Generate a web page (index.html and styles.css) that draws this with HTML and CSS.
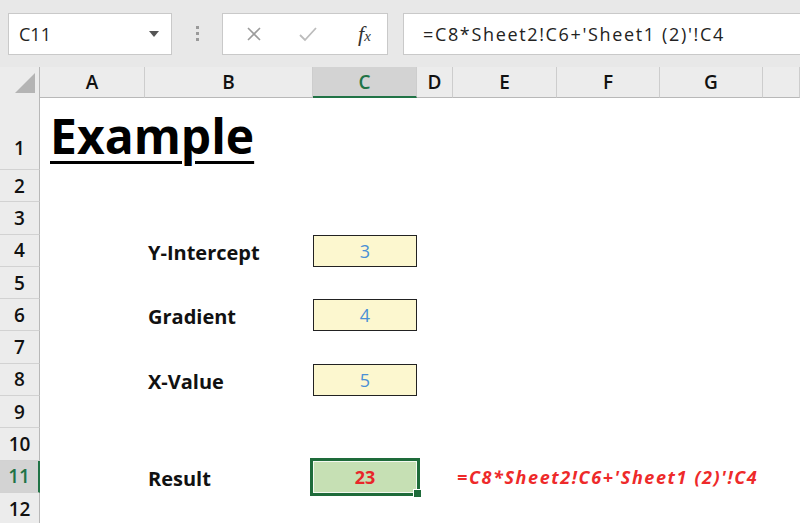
FILE: index.html
```html
<!DOCTYPE html>
<html lang="en">
<head>
    <meta charset="UTF-8">
    <title>Example - Sheet1</title>
    <link rel="stylesheet" href="styles.css">
</head>
<body>

<div class="toolbar">
    <div class="namebox">
        <span>C11</span>
        <svg width="10" height="6" viewBox="0 0 10 6"><path d="M0 0 L10 0 L5 6 Z" fill="#555"/></svg>
    </div>
    <div class="grip"><i></i><i></i><i></i></div>
    <div class="fxbox">
        <svg class="ico-x" width="16" height="16" viewBox="0 0 16 16"><path d="M2 2 L14 14 M14 2 L2 14" stroke="#9c9c9c" stroke-width="1.6" fill="none"/></svg>
        <svg class="ico-ok" width="20" height="16" viewBox="0 0 20 16"><path d="M2 9 L7 14 L18 2" stroke="#bcbcbc" stroke-width="1.8" fill="none"/></svg>
        <span class="fx">f<small>x</small></span>
    </div>
    <div class="formula">=C8*Sheet2!C6+'Sheet1 (2)'!C4</div>
</div>

<div class="sheet">
    <div class="row head">
        <div class="corner">
            <svg width="40" height="30" viewBox="0 0 40 30"><path d="M35 6 L35 26 L15 26 Z" fill="#b4b4b4"/></svg>
        </div>
        <div class="ch">A</div>
        <div class="ch">B</div>
        <div class="ch sel">C</div>
        <div class="ch">D</div>
        <div class="ch">E</div>
        <div class="ch">F</div>
        <div class="ch">G</div>
        <div class="ch"></div>
    </div>

    <div class="row tall">
        <div class="rh">1</div>
        <div class="cell title">Example</div>
    </div>
    <div class="row"><div class="rh">2</div></div>
    <div class="row"><div class="rh">3</div></div>
    <div class="row">
        <div class="rh">4</div>
        <div class="cell"></div>
        <div class="cell label">Y-Intercept</div>
        <div class="cell box">3</div>
    </div>
    <div class="row"><div class="rh">5</div></div>
    <div class="row">
        <div class="rh">6</div>
        <div class="cell"></div>
        <div class="cell label">Gradient</div>
        <div class="cell box">4</div>
    </div>
    <div class="row"><div class="rh">7</div></div>
    <div class="row">
        <div class="rh">8</div>
        <div class="cell"></div>
        <div class="cell label">X-Value</div>
        <div class="cell box">5</div>
    </div>
    <div class="row"><div class="rh">9</div></div>
    <div class="row"><div class="rh">10</div></div>
    <div class="row">
        <div class="rh sel">11</div>
        <div class="cell"></div>
        <div class="cell label">Result</div>
        <div class="cell result">23<span class="handle"></span></div>
        <div class="cell"></div>
        <div class="cell note">=C8*Sheet2!C6+'Sheet1 (2)'!C4</div>
    </div>
    <div class="row"><div class="rh">12</div></div>
</div>

</body>
</html>
```

FILE: styles.css
```css
body {
    margin: 0;
    width: 800px;
    height: 523px;
    overflow: hidden;
    font-family: "Open Sans", Lato, sans-serif;
    background: #fff;
    color: #111;
}

/* formula bar */
.toolbar {
    display: flex;
    align-items: center;
    height: 67px;
    padding-left: 8px;
    box-sizing: border-box;
    background: #e8e8e8;
}

.namebox {
    width: 164px;
    height: 42px;
    box-sizing: border-box;
    display: flex;
    align-items: center;
    justify-content: space-between;
    padding: 0 12px 0 10px;
    background: #fff;
    border: 1px solid #c9c9c9;
    font-size: 18px;
    color: #222;
}

.grip {
    width: 50px;
    display: flex;
    flex-direction: column;
    align-items: center;
    gap: 3px;
}

.grip i {
    width: 3px;
    height: 3px;
    background: #9a9a9a;
}

.fxbox {
    width: 166px;
    height: 42px;
    box-sizing: border-box;
    display: flex;
    align-items: center;
    padding-left: 23px;
    background: #fff;
    border: 1px solid #c9c9c9;
}

.ico-x { margin-right: 36px; }
.ico-ok { margin-right: 40px; }

.fx {
    font-family: "Liberation Serif", serif;
    font-style: italic;
    font-size: 22px;
    color: #333;
}

.fx small {
    font-size: 15px;
}

.formula {
    flex: 1;
    height: 42px;
    box-sizing: border-box;
    margin-left: 15px;
    display: flex;
    align-items: center;
    padding-left: 19px;
    background: #fff;
    border: 1px solid #c9c9c9;
    border-right: none;
    font-size: 18px;
    letter-spacing: 1.65px;
    color: #222;
    white-space: nowrap;
}

/* sheet */
.row {
    display: grid;
    grid-template-columns: 40px 105px 168px 104px 36px 104px 103px 103px 1fr;
    height: 32.3px;
}

.row.tall { height: 73px; }
.row.head {
    height: 30px;
    background: #ececec;
}

.corner {
    border-right: 1px solid #b8b8b8;
    border-bottom: 1px solid #b8b8b8;
    box-sizing: border-box;
}

.corner svg { display: block; }

.ch {
    display: flex;
    align-items: center;
    justify-content: center;
    box-sizing: border-box;
    border-right: 1px solid #cdcdcd;
    border-bottom: 1px solid #b8b8b8;
    font-size: 19px;
    font-weight: 600;
    color: #111;
}

.ch.sel {
    background: #d3d3d3;
    color: #217346;
    border-bottom: 2px solid #217346;
}

.rh {
    display: flex;
    align-items: center;
    justify-content: center;
    box-sizing: border-box;
    background: #ececec;
    border-right: 1px solid #b8b8b8;
    border-bottom: 1px solid #d2d2d2;
    font-size: 19px;
    font-weight: 600;
    color: #111;
}

.tall .rh {
    align-items: flex-end;
    padding-bottom: 8px;
}

.rh.sel {
    background: #d3d3d3;
    color: #217346;
    border-right: 2px solid #217346;
}

.cell {
    display: flex;
    align-items: center;
    box-sizing: border-box;
    font-size: 18px;
    white-space: nowrap;
}

.title {
    grid-column: 2 / 5;
    align-items: flex-end;
    padding: 0 0 10px 10px;
    font-size: 48px;
    line-height: 1;
    font-weight: bold;
    text-decoration: underline;
    text-decoration-thickness: 3px;
    text-underline-offset: 7px;
    color: #000;
}

.label {
    padding: 3px 0 0 3px;
    font-weight: bold;
    font-size: 20px;
}

.box {
    justify-content: center;
    background: #fcf7cf;
    border: 1.5px solid #222;
    color: #4a90d6;
}

.result {
    position: relative;
    justify-content: center;
    background: #c6e0b4;
    border: 1px solid #f4f9f0;
    outline: 3px solid #1e6b3a;
    font-weight: bold;
    color: #e8262a;
}

.handle {
    position: absolute;
    right: -6px;
    bottom: -6px;
    width: 7px;
    height: 7px;
    background: #1e6b3a;
    border: 1px solid #fff;
}

.note {
    padding-left: 4px;
    overflow: visible;
    font-weight: bold;
    font-style: italic;
    letter-spacing: 1.6px;
    color: #ee2a2a;
}
```
